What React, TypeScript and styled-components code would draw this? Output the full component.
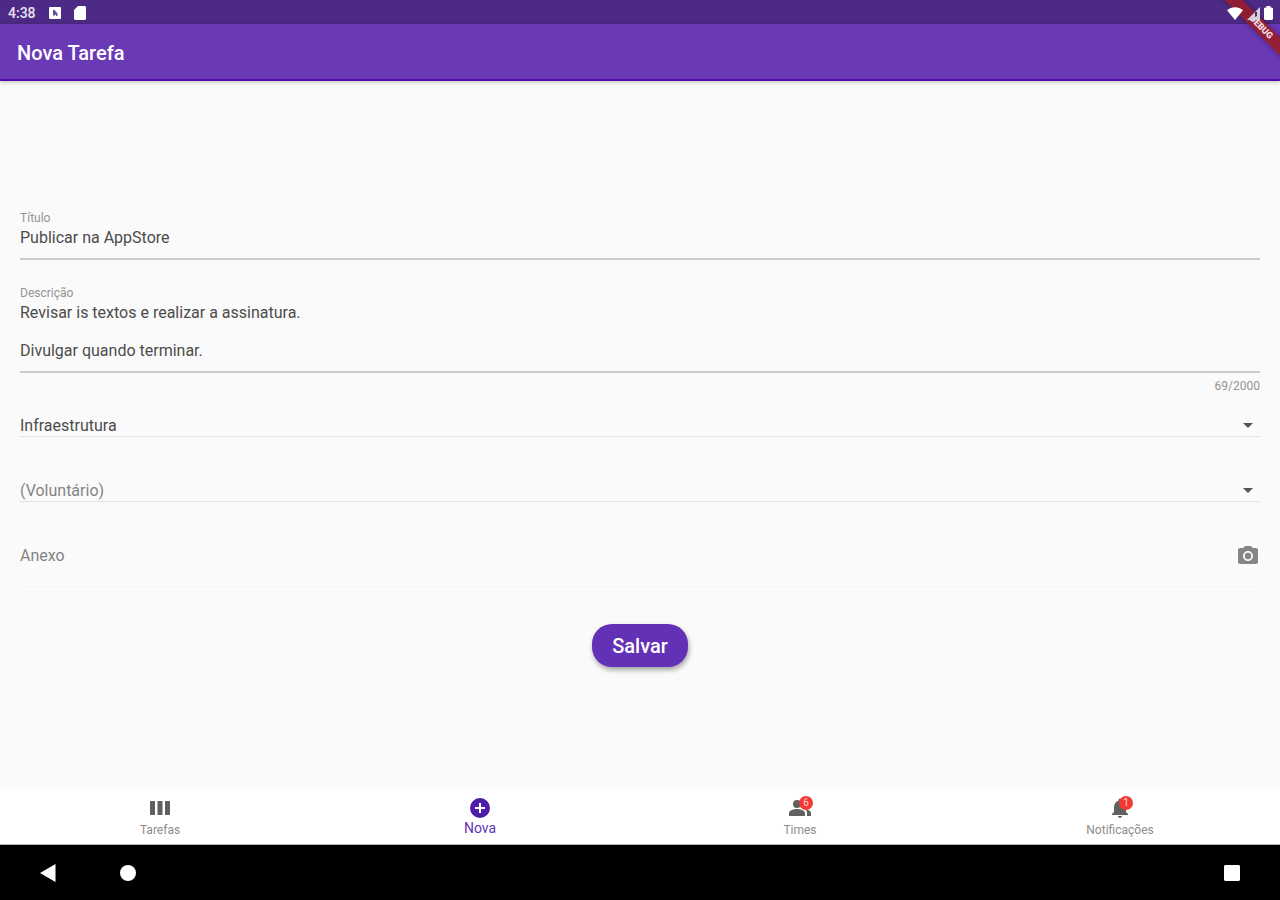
import React, { useState } from "react";
import styled, { createGlobalStyle } from "styled-components";

const GlobalStyle = createGlobalStyle`
  * { box-sizing: border-box; }
  body { margin: 0; background: #fafafa; font-family: Roboto, "Liberation Sans", sans-serif; }
  button, input, textarea, select { font-family: inherit; }
`;

const Screen = styled.div`
  display: flex;
  flex-direction: column;
  min-height: 100vh;
  position: relative;
  overflow: hidden;
`;

const StatusBar = styled.div`
  display: flex;
  align-items: center;
  justify-content: space-between;
  height: 24px;
  padding: 2px 7px 0 8px;
  background: #4c2a85;
  color: #e9e4f1;
  font-size: 14px;
  font-weight: 500;
`;

const StatusGroup = styled.div<{ $gap: number }>`
  display: flex;
  align-items: center;
  gap: ${(p) => p.$gap}px;
  position: relative;
  z-index: 1;
  svg { display: block; }
`;

const AppBar = styled.header`
  display: flex;
  align-items: center;
  height: 57px;
  padding: 2px 17px 0;
  background: #6939b6;
  border-bottom: 2px solid #4f0bab;
  box-shadow: 0 1px 4px rgba(0, 0, 0, 0.25);
`;

const Title = styled.h1`
  margin: 0;
  color: #fff;
  font-size: 20px;
  line-height: 24px;
  font-weight: 500;
`;

const Ribbon = styled.div`
  position: absolute;
  top: 21px;
  right: -41px;
  width: 120px;
  height: 13px;
  background: rgba(153, 27, 40, 0.88);
  color: #f3dfe3;
  font-size: 9px;
  line-height: 13px;
  font-weight: 900;
  text-align: center;
  transform: rotate(45deg);
  box-shadow: 0 0 5px rgba(0, 0, 0, 0.35);
`;

const Form = styled.form`
  flex: 1;
  display: flex;
  flex-direction: column;
  padding: 131px 20px 40px;
`;

const Field = styled.div<{ $spaced?: boolean }>`
  display: flex;
  flex-direction: column;
  margin-top: ${(p) => (p.$spaced ? 27 : 0)}px;
`;

const Label = styled.label`
  color: #949494;
  font-size: 12px;
  line-height: 12px;
  margin-bottom: 4px;
`;

const TextInput = styled.input`
  width: 100%;
  height: 32px;
  padding: 0 0 12px;
  border: 0;
  border-bottom: 2px solid #cbcbcb;
  outline: 0;
  background: transparent;
  color: #4c4c4c;
  font-size: 16px;
  line-height: 19px;
`;

const TextArea = styled.textarea`
  display: block;
  width: 100%;
  height: 70px;
  padding: 0 0 11px;
  border: 0;
  border-bottom: 2px solid #cbcbcb;
  outline: 0;
  resize: none;
  overflow: hidden;
  background: transparent;
  color: #4c4c4c;
  font-size: 16px;
  line-height: 19px;
`;

const Counter = styled.span`
  align-self: flex-end;
  margin-top: 7px;
  color: #949494;
  font-size: 12px;
  line-height: 12px;
`;

const SelectWrap = styled.div<{ $spaced?: boolean }>`
  display: grid;
  align-items: center;
  margin-top: ${(p) => (p.$spaced ? 43 : 23)}px;
  padding-bottom: 1px;
  border-bottom: 1px solid #e2e2e2;
  svg {
    grid-area: 1 / 1;
    justify-self: end;
    margin-right: 7px;
    pointer-events: none;
  }
`;

const Select = styled.select<{ $muted?: boolean }>`
  grid-area: 1 / 1;
  width: 100%;
  height: 20px;
  padding: 0;
  border: 0;
  outline: 0;
  appearance: none;
  background: transparent;
  color: ${(p) => (p.$muted ? "#848484" : "#4c4c4c")};
  font-size: 16px;
  line-height: 19px;
`;

const Attachment = styled.div`
  display: flex;
  align-items: center;
  justify-content: space-between;
  height: 62px;
  margin-top: 23px;
  border-bottom: 1px solid #f4f4f4;
  color: #848484;
  font-size: 16px;
`;

const IconButton = styled.button`
  display: flex;
  padding: 0;
  border: 0;
  background: none;
  color: #868686;
  cursor: pointer;
`;

const SaveButton = styled.button`
  align-self: center;
  height: 43px;
  margin-top: 37px;
  padding: 0 20px;
  border: 0;
  border-radius: 20px;
  background: #6231b5;
  color: #fff;
  font-size: 20px;
  font-weight: 500;
  box-shadow: 1px 3px 5px rgba(0, 0, 0, 0.35);
  cursor: pointer;
`;

const Tabs = styled.nav`
  display: flex;
  height: 56px;
  background: #fff;
  border-bottom: 1px solid #b5b5b5;
`;

const Tab = styled.button<{ $active?: boolean }>`
  flex: 1;
  display: flex;
  flex-direction: column;
  align-items: center;
  gap: ${(p) => (p.$active ? 0 : 2)}px;
  padding: 7px 0 0;
  border: 0;
  background: none;
  color: ${(p) => (p.$active ? "#6034b3" : "#8c8c8c")};
  font-size: ${(p) => (p.$active ? 14 : 12)}px;
  line-height: 16px;
  cursor: pointer;
`;

const TabIcon = styled.span<{ $active?: boolean }>`
  position: relative;
  display: flex;
  color: ${(p) => (p.$active ? "#4f1ba9" : "#616161")};
`;

const Badge = styled.span`
  position: absolute;
  top: 0;
  right: -1px;
  width: 14px;
  height: 14px;
  border-radius: 7px;
  background: #f23a34;
  color: #ffd9d6;
  font-size: 10px;
  line-height: 14px;
  text-align: center;
`;

const SystemBar = styled.div`
  display: flex;
  align-items: center;
  justify-content: space-between;
  height: 55px;
  padding: 0 36px;
  background: #000;
`;

const SystemGroup = styled.div`
  display: flex;
  gap: 56px;
`;

const SystemButton = styled.button`
  display: flex;
  padding: 0;
  border: 0;
  background: none;
  color: #fff;
  cursor: pointer;
`;

const Icon = ({ d }: { d: string }) => (
  <svg width="24" height="24" viewBox="0 0 24 24" fill="currentColor" fillRule="evenodd" aria-hidden="true">
    <path d={d} />
  </svg>
);

const CAMERA =
  "M12 8.8a3.2 3.2 0 1 0 0 6.4 3.2 3.2 0 0 0 0-6.4zM9 2 7.17 4H4c-1.1 0-2 .9-2 2v12c0 1.1.9 2 2 2h16c1.1 0 2-.9 2-2V6c0-1.1-.9-2-2-2h-3.17L15 2H9zm3 15c-2.76 0-5-2.24-5-5s2.24-5 5-5 5 2.24 5 5-2.24 5-5 5z";
const COLUMNS = "M2 5h5v14H2zM9.5 5h5v14h-5zM17 5h5v14h-5z";
const ADD = "M12 2a10 10 0 1 0 0 20 10 10 0 0 0 0-20zm5 11h-4v4h-2v-4H7v-2h4V7h2v4h4z";
const PEOPLE =
  "M16.7 13.1c1.4.9 2.3 2.2 2.3 3.9v3h4v-3c0-2.2-3.6-3.5-6.3-3.9zM15 12a4 4 0 0 0 0-8c-.5 0-.9.1-1.3.2a6 6 0 0 1 0 7.6c.4.1.8.2 1.3.2zM9 4a4 4 0 1 0 0 8 4 4 0 0 0 0-8zM9 13c-2.7 0-8 1.3-8 4v3h16v-3c0-2.7-5.3-4-8-4z";
const BELL =
  "M12 22c1.1 0 2-.9 2-2h-4c0 1.1.9 2 2 2zm6-6v-5c0-3.07-1.63-5.64-4.5-6.32V4a1.5 1.5 0 0 0-3 0v.68C7.64 5.36 6 7.92 6 11v5l-2 2v1h16v-1l-2-2z";

const Caret = () => (
  <svg width="10" height="5" viewBox="0 0 10 5" fill="#555" aria-hidden="true">
    <path d="M0 0h10L5 5z" />
  </svg>
);

const tabs = [
  { label: "Tarefas", icon: COLUMNS },
  { label: "Nova", icon: ADD, active: true },
  { label: "Times", icon: PEOPLE, badge: "6" },
  { label: "Notificações", icon: BELL, badge: "1" },
];

export default function App() {
  const [title, setTitle] = useState("Publicar na AppStore");
  const [description, setDescription] = useState(
    "Revisar is textos e realizar a assinatura.\n\nDivulgar quando terminar."
  );

  return (
    <Screen>
      <GlobalStyle />
      <StatusBar>
        <StatusGroup $gap={13}>
          <span>4:38</span>
          <svg width="12" height="12" viewBox="0 0 12 12" aria-hidden="true">
            <rect width="12" height="12" rx="1" fill="#fff" />
            <path d="M4 3h1.500l3 3.500V9H7.500L6 7v1.500H4z" fill="#65479a" />
          </svg>
          <svg width="12" height="14" viewBox="0 0 12 14" aria-hidden="true">
            <path d="M4 0h7l1 1v12l-1 1H1l-1-1V4z" fill="#fff" />
          </svg>
        </StatusGroup>
        <StatusGroup $gap={4}>
          <svg width="16" height="13" viewBox="0 0 16 13" aria-hidden="true">
            <path d="M8 13 0 3.200C4.400-.8 11.600-.8 16 3.200z" fill="#fff" />
          </svg>
          <svg width="13" height="13" viewBox="0 0 13 13" aria-hidden="true">
            <path d="M0 13 13 0v13z" fill="#d9cfdc" />
            <path d="M8 5h2v4L8 10z" fill="#4c2a55" />
          </svg>
          <svg width="9" height="14" viewBox="0 0 9 14" aria-hidden="true">
            <path d="M2.500 0h4v1.500H8l1 1V13l-1 1H1l-1-1V2.500l1-1h1.500z" fill="#fff" />
          </svg>
        </StatusGroup>
      </StatusBar>
      <AppBar>
        <Title>Nova Tarefa</Title>
      </AppBar>
      <Ribbon>DEBUG</Ribbon>

      <Form onSubmit={(e) => e.preventDefault()}>
        <Field>
          <Label htmlFor="titulo">Título</Label>
          <TextInput id="titulo" value={title} onChange={(e) => setTitle(e.target.value)} />
        </Field>
        <Field $spaced>
          <Label htmlFor="descricao">Descrição</Label>
          <TextArea
            id="descricao"
            rows={3}
            spellCheck={false}
            value={description}
            onChange={(e) => setDescription(e.target.value)}
          />
          <Counter>69/2000</Counter>
        </Field>
        <SelectWrap>
          <Select aria-label="Time" defaultValue="infra">
            <option value="infra">Infraestrutura</option>
          </Select>
          <Caret />
        </SelectWrap>
        <SelectWrap $spaced>
          <Select aria-label="Voluntário" defaultValue="" $muted>
            <option value="">(Voluntário)</option>
          </Select>
          <Caret />
        </SelectWrap>
        <Attachment>
          <span>Anexo</span>
          <IconButton type="button" aria-label="Adicionar foto">
            <Icon d={CAMERA} />
          </IconButton>
        </Attachment>
        <SaveButton type="submit">Salvar</SaveButton>
      </Form>

      <Tabs>
        {tabs.map((t) => (
          <Tab key={t.label} type="button" $active={t.active}>
            <TabIcon $active={t.active}>
              <Icon d={t.icon} />
              {t.badge && <Badge>{t.badge}</Badge>}
            </TabIcon>
            {t.label}
          </Tab>
        ))}
      </Tabs>
      <SystemBar>
        <SystemGroup>
          <SystemButton type="button" aria-label="Voltar">
            <Icon d="M4 12 19.500 3v18z" />
          </SystemButton>
          <SystemButton type="button" aria-label="Início">
            <Icon d="M12 4a8 8 0 1 0 0 16 8 8 0 0 0 0-16z" />
          </SystemButton>
        </SystemGroup>
        <SystemButton type="button" aria-label="Recentes">
          <Icon d="M5 4h14l1 1v14l-1 1H5l-1-1V5z" />
        </SystemButton>
      </SystemBar>
    </Screen>
  );
}
